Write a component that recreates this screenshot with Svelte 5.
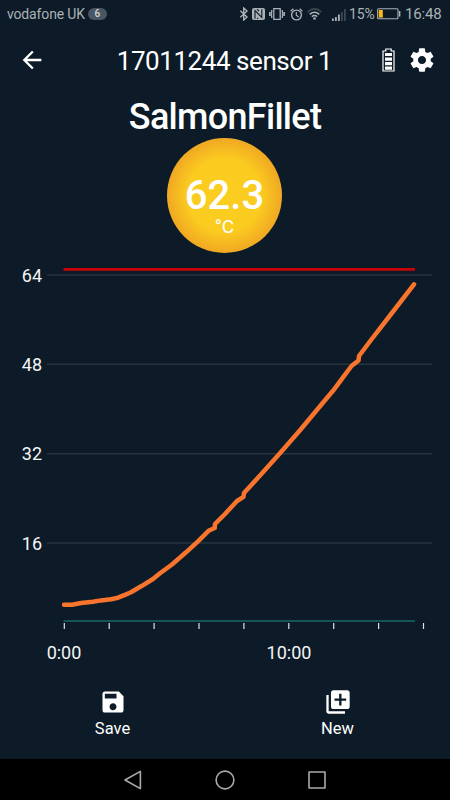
<script lang="ts">
  interface Point {
    x: number;
    y: number;
  }

  const carrier = 'vodafone UK';
  const notifications = 6;
  const charge = 15;

  const gridLines = [
    { label: '64', y: 25 },
    { label: '48', y: 114.3 },
    { label: '32', y: 203.7 },
    { label: '16', y: 293 }
  ];

  const ticks = Array.from({ length: 9 }, (_, i) => 64.3 + i * 44.9);

  const readings: Point[] = [
    { x: 64, y: 354.8 }, { x: 72, y: 354.7 }, { x: 81, y: 353 },
    { x: 93, y: 351.7 }, { x: 101, y: 350.4 }, { x: 111, y: 349.2 },
    { x: 118, y: 347.7 }, { x: 125, y: 344.8 }, { x: 131, y: 342.2 },
    { x: 142, y: 335.8 }, { x: 153, y: 329 }, { x: 160, y: 323.3 },
    { x: 172, y: 314.5 }, { x: 186, y: 302.3 }, { x: 198, y: 291.3 },
    { x: 208.5, y: 280.8 }, { x: 214.7, y: 278 }, { x: 215, y: 274 },
    { x: 225, y: 264 }, { x: 237, y: 251 }, { x: 243.5, y: 246.8 },
    { x: 244, y: 243 }, { x: 260, y: 225.5 }, { x: 279.5, y: 203.7 },
    { x: 300, y: 180.3 }, { x: 325, y: 150.3 }, { x: 333, y: 140.8 },
    { x: 343, y: 127.3 }, { x: 351.5, y: 116 }, { x: 358.5, y: 110.5 },
    { x: 359, y: 106 }, { x: 371, y: 90 }, { x: 390, y: 65.5 },
    { x: 414, y: 34.4 }
  ];

  const line = readings.map((p) => `${p.x},${p.y}`).join(' ');
</script>

<div class="screen">
  <div class="status">
    <span class="carrier">{carrier}</span>
    <span class="count">{notifications}</span>
    <div class="indicators">
      <svg class="bluetooth" width="10" height="14" viewBox="0 0 10 14">
        <path d="M1.3 3.8 8 10.1 4.7 13V1L8 3.9 1.3 10.2" fill="none" stroke="currentColor" stroke-width="1.4" />
      </svg>
      <svg class="nfc" width="13" height="12" viewBox="0 0 13 12">
        <path d="M2 0h9q2 0 2 2v8q0 2-2 2H2q-2 0-2-2V2q0-2 2-2z" fill="currentColor" />
        <path d="M3 10.8V2.6l6.8 6.8V1.2M5 1.2l2 2M6.2 10.8l-1-1" fill="none" stroke="#0c1b27" stroke-width="1.1" />
      </svg>
      <svg class="vibrate" width="16" height="12" viewBox="0 0 16 12">
        <path d="M4.8.6h6.4v10.8H4.8zM2.7 2v2L2 5l.7 1L2 7l.7 1v2M.7 4v4M13.3 2v2l.7 1-.7 1 .7 1-.7 1v2M15.3 4v4" fill="none" stroke="currentColor" stroke-width="1.3" />
      </svg>
      <svg class="alarm" width="13" height="13" viewBox="0 0 13 13">
        <circle cx="6.5" cy="7" r="4.9" fill="none" stroke="currentColor" stroke-width="1.4" />
        <path d="M6.3 4v3.3l2.4 1.8M.6 3.2 3.4.8M12.4 3.2 9.6.8" fill="none" stroke="currentColor" stroke-width="1.2" />
      </svg>
      <svg class="wifi" width="15" height="12" viewBox="0 0 15 12">
        <g fill="none" stroke="currentColor" stroke-width="1.5">
          <path d="M.6 4.1q6.9-6.4 13.8 0" opacity=".3" />
          <path d="M2.7 6.4q4.8-4.3 9.6 0M4.8 8.6q2.7-2.2 5.4 0" />
        </g>
        <circle cx="7.5" cy="10.5" r="1.3" fill="currentColor" />
      </svg>
      <svg class="signal" width="14" height="13" viewBox="0 0 14 13">
        <path d="M0 10.5h1.8V13H0zM3 9h1.8v4H3zM6 6.5h1.8V13H6z" fill="currentColor" />
        <path d="M9 4h1.8v9H9zM12 1h1.8v12H12z" fill="currentColor" opacity=".3" />
      </svg>
      <span class="percent">{charge}%</span>
      <svg class="battery" width="24" height="12" viewBox="0 0 24 12">
        <rect x=".6" y=".8" width="20.4" height="10" rx="1" fill="none" stroke="currentColor" stroke-width="1.1" />
        <rect x="1.8" y="2" width="4" height="7.6" fill="#fdb813" />
        <path d="M22.7 3v5.6" stroke="currentColor" stroke-width="1.4" />
      </svg>
      <span class="clock">16:48</span>
    </div>
  </div>

  <header class="toolbar">
    <svg class="back" width="28" height="28" viewBox="0 0 24 24">
      <path d="M20 11H7.83l5.59-5.59L12 4l-8 8 8 8 1.41-1.41L7.83 13H20v-2z" fill="currentColor" />
    </svg>
    <h1>17011244 sensor 1</h1>
    <svg class="cell" width="13" height="24" viewBox="0 0 13 24">
      <path d="M1 3h2.8V1h5.4v2H12v20H1z" fill="none" stroke="currentColor" stroke-width="1.2" />
      <path d="M3 5h7v3H3zM3 9.4h7v3.4H3zM3 14.1h7v3.2H3zM3 18.6h7v3.2H3z" fill="currentColor" />
    </svg>
    <svg class="gear" width="28" height="28" viewBox="0 0 24 24">
      <path d="M19.43 12.98c.04-.32.07-.64.07-.98s-.03-.66-.07-.98l2.11-1.65c.19-.15.24-.42.12-.64l-2-3.46c-.12-.22-.39-.3-.61-.22l-2.49 1c-.52-.4-1.08-.73-1.69-.98l-.38-2.65C14.46 2.18 14.25 2 14 2h-4c-.25 0-.46.18-.49.42l-.38 2.65c-.61.25-1.17.59-1.69.98l-2.49-1c-.23-.09-.49 0-.61.22l-2 3.46c-.13.22-.07.49.12.64l2.11 1.65c-.04.32-.07.65-.07.98s.03.66.07.98l-2.11 1.65c-.19.15-.24.42-.12.64l2 3.46c.12.22.39.3.61.22l2.49-1c.52.4 1.08.73 1.69.98l.38 2.65c.03.24.24.42.49.42h4c.25 0 .46-.18.49-.42l.38-2.65c.61-.25 1.17-.59 1.69-.98l2.49 1c.23.09.49 0 .61-.22l2-3.46c.12-.22.07-.49-.12-.64l-2.11-1.65zM12 15.5c-1.93 0-3.5-1.57-3.5-3.5s1.57-3.5 3.5-3.5 3.5 1.57 3.5 3.5-1.57 3.5-3.5 3.5z" fill="currentColor" />
    </svg>
  </header>

  <h2>SalmonFillet</h2>

  <div class="reading">
    <span class="value">62.3</span>
    <span class="unit">°C</span>
  </div>

  <svg class="chart" width="450" height="425" viewBox="0 0 450 425">
    {#each gridLines as grid}
      <line x1="47" x2="432" y1={grid.y} y2={grid.y} stroke="#26343f" stroke-width="1.5" />
      <text x="42" y={grid.y + 6.6} text-anchor="end">{grid.label}</text>
    {/each}
    <line x1="63.5" x2="415" y1="19.4" y2="19.4" stroke="#c90407" stroke-width="2.6" />
    <line x1="63.5" x2="415" y1="371" y2="371" stroke="#175457" stroke-width="1.8" />
    {#each ticks as x}
      <line x1={x} x2={x} y1="373" y2="379" stroke="#dfe2e4" stroke-width="1.2" />
    {/each}
    <polyline points={line} fill="none" stroke="#f9742d" stroke-width="4.5" stroke-linecap="round" stroke-linejoin="round" />
    <text x="64" y="409" text-anchor="middle">0:00</text>
    <text x="289" y="409" text-anchor="middle">10:00</text>
  </svg>

  <div class="actions">
    <div class="action">
      <svg width="28" height="28" viewBox="0 0 24 24">
        <path d="M17 3H5c-1.11 0-2 .9-2 2v14c0 1.1.89 2 2 2h14c1.1 0 2-.9 2-2V7l-4-4zm-5 16c-1.66 0-3-1.34-3-3s1.34-3 3-3 3 1.34 3 3-1.34 3-3 3zm3-10H5V5h10v4z" fill="currentColor" />
      </svg>
      <span>Save</span>
    </div>
    <div class="action">
      <svg width="28" height="28" viewBox="0 0 24 24">
        <path d="M4 6H2v14c0 1.1.9 2 2 2h14v-2H4V6zm16-4H8c-1.1 0-2 .9-2 2v12c0 1.1.9 2 2 2h12c1.1 0 2-.9 2-2V4c0-1.1-.9-2-2-2zm-1 9h-4v4h-2v-4H9V9h4V5h2v4h4v2z" fill="currentColor" />
      </svg>
      <span>New</span>
    </div>
  </div>

  <nav>
    <svg width="20" height="20" viewBox="0 0 20 20">
      <path d="M17.4 1.4v17.2L2 10z" />
    </svg>
    <svg width="20" height="20" viewBox="0 0 20 20">
      <circle cx="10" cy="10" r="8.9" />
    </svg>
    <svg width="20" height="20" viewBox="0 0 20 20">
      <rect x="2" y="2" width="16" height="16" />
    </svg>
  </nav>
</div>

<style>
  :global(body) {
    margin: 0;
    background: #0c1b27;
  }

  .screen {
    display: flex;
    flex-direction: column;
    width: 450px;
    height: 800px;
    overflow: hidden;
    background: #0c1b27;
    color: #fff;
    font-family: Roboto, sans-serif;
  }

  svg {
    display: block;
    flex: none;
  }

  .status {
    display: flex;
    align-items: center;
    height: 28px;
    padding: 0 9px 0 7px;
    color: #abb1b6;
    font-size: 14px;
    line-height: 28px;
    white-space: nowrap;
  }

  .carrier {
    letter-spacing: -0.15px;
  }

  .count {
    width: 19px;
    height: 12px;
    margin-left: 3px;
    border-radius: 6px;
    background: #4a5661;
    color: #d5d9dc;
    font-size: 10px;
    font-weight: 500;
    line-height: 12px;
    text-align: center;
  }

  .indicators {
    display: flex;
    align-items: center;
    margin-left: auto;
  }

  .nfc {
    margin-left: 3px;
  }

  .vibrate {
    margin-left: 4px;
  }

  .alarm {
    margin-left: 5px;
  }

  .wifi {
    margin-left: 4px;
  }

  .signal {
    margin-left: 10px;
  }

  .percent {
    width: 26px;
    margin-left: 3px;
    letter-spacing: -0.15px;
  }

  .battery {
    margin-left: 2px;
  }

  .clock {
    width: 36px;
    margin-left: 4px;
    font-size: 15px;
    letter-spacing: -0.15px;
  }

  .toolbar {
    display: flex;
    align-items: center;
    height: 64px;
    padding: 0 14px 0 18px;
  }

  h1 {
    flex: 1;
    margin: 2px 0 0 21px;
    font-size: 26px;
    font-weight: 400;
    letter-spacing: -0.45px;
    line-height: 32px;
    text-align: center;
    white-space: nowrap;
  }

  .cell {
    margin-right: 13px;
  }

  h2 {
    height: 46px;
    margin: 0;
    font-size: 36px;
    font-weight: 500;
    letter-spacing: -0.7px;
    line-height: 50px;
    text-align: center;
  }

  .reading {
    display: flex;
    flex-direction: column;
    align-items: center;
    align-self: center;
    box-sizing: border-box;
    width: 115px;
    height: 115px;
    margin-right: 1px;
    padding-top: 37px;
    border-radius: 50%;
    background: radial-gradient(circle closest-side, #fbce20 0%, #fbcb20 64%, #f0a823 100%);
  }

  .value {
    font-size: 40px;
    font-weight: 500;
    line-height: 41px;
  }

  .unit {
    font-size: 19px;
    line-height: 21px;
  }

  .chart {
    margin-top: -3px;
  }

  .chart text {
    fill: #f4f5f6;
    font-size: 18px;
  }

  .actions {
    display: grid;
    grid-template-columns: 1fr 1fr;
    flex: 1;
    padding-top: 13px;
  }

  .action {
    display: flex;
    flex-direction: column;
    align-items: center;
    font-size: 16.5px;
    line-height: 25px;
  }

  nav {
    display: flex;
    align-items: center;
    justify-content: center;
    gap: 72px;
    height: 41px;
    background: #000;
  }

  nav svg {
    fill: none;
    stroke: #aaa;
    stroke-width: 1.6;
    stroke-linejoin: round;
  }
</style>
